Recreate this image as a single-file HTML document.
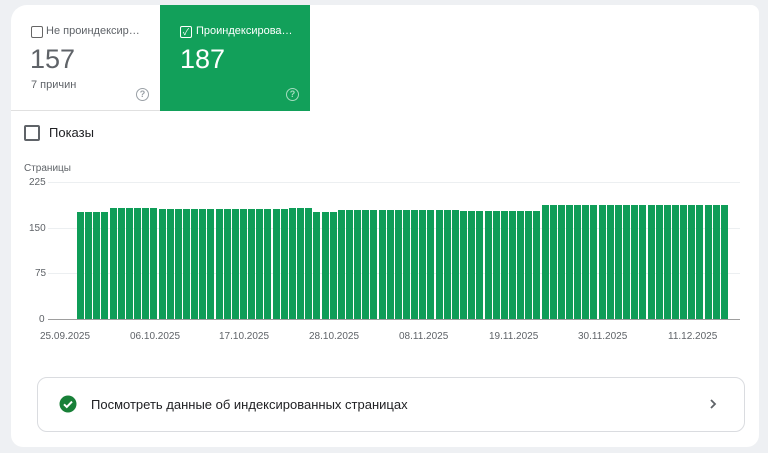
<!DOCTYPE html>
<html><head><meta charset="utf-8"><style>
body{margin:0;width:768px;height:453px;background:#eef0f3;font-family:"Liberation Sans",Roboto,"Noto Sans CJK SC",sans-serif;overflow:hidden;position:relative}
.card{position:absolute;left:11px;top:5px;width:748px;height:442px;background:#fff;border-radius:16px 8px 12px 12px}
.t1{position:absolute;left:11px;top:5px;width:149px;height:105px;border-bottom:1px solid #e0e0e0;border-top-left-radius:16px}
.t2{position:absolute;left:160px;top:5px;width:150px;height:106px;background:#12a05a}
.cb{position:absolute;width:10px;height:10px;border:1px solid #666;border-radius:2px}
.lbl{position:absolute;font-size:11px;color:#5f6368}
.num{position:absolute;font-size:27px;color:#5f6368}
.q{position:absolute;width:11px;height:11px;border:1.3px solid #9aa0a6;border-radius:50%;font-size:9px;line-height:11px;text-align:center;color:#9aa0a6;font-weight:bold}
.ax{position:absolute;font-size:10px;color:#5f6368}
.grid{position:absolute;left:48px;width:692px;height:1px;background:#eceff1}
.bar{position:absolute;width:7px;background:#0f9d58}
.btn{position:absolute;left:37px;top:377px;width:706px;height:53px;border:1px solid #dadce0;border-radius:10px;background:#fff}
</style></head><body>
<div class="card"></div>
<div class="t1"></div>
<div class="cb" style="left:31px;top:26px"></div>
<div class="lbl" style="left:46px;top:25px">Не проиндексир…</div>
<div class="num" style="left:30px;top:44px">157</div>
<div class="lbl" style="left:31px;top:79px">7 причин</div>
<div class="q" style="left:136px;top:88px">?</div>
<div class="t2"></div>
<div class="cb" style="left:180px;top:26px;border-color:#fff;color:#fff;font-size:9px;line-height:10px;text-align:center">✓</div>
<div class="lbl" style="left:196px;top:25px;color:#fff">Проиндексирова…</div>
<div class="num" style="left:180px;top:44px;color:#fff">187</div>
<div class="q" style="left:286px;top:88px;border-color:#a5dcbf;color:#a5dcbf">?</div>
<div style="position:absolute;left:24px;top:125px;width:12px;height:12px;border:2px solid #5f6368;border-radius:2px"></div>
<div style="position:absolute;left:49px;top:125px;font-size:13px;color:#202124">Показы</div>
<div class="ax" style="left:24px;top:163px">Страницы</div>
<div class="ax" style="left:29px;top:177px">225</div><div class="grid" style="top:182px"></div>
<div class="ax" style="left:29px;top:223px">150</div><div class="grid" style="top:228px"></div>
<div class="ax" style="left:35px;top:268px">75</div><div class="grid" style="top:273px"></div>
<div class="ax" style="left:39px;top:314px">0</div><div class="grid" style="top:319px;background:#9e9e9e"></div>
<div id="bars"></div>
<div class="ax" style="left:40px;top:331px">25.09.2025</div>
<div class="ax" style="left:130px;top:331px">06.10.2025</div>
<div class="ax" style="left:219px;top:331px">17.10.2025</div>
<div class="ax" style="left:309px;top:331px">28.10.2025</div>
<div class="ax" style="left:399px;top:331px">08.11.2025</div>
<div class="ax" style="left:489px;top:331px">19.11.2025</div>
<div class="ax" style="left:578px;top:331px">30.11.2025</div>
<div class="ax" style="left:668px;top:331px">11.12.2025</div>
<div class="btn"></div>
<svg style="position:absolute;left:59px;top:395px" width="18" height="18" viewBox="0 0 18 18"><circle cx="9" cy="9" r="8.5" fill="#188038"/><path d="M5 9.3l2.8 2.7L13 6.6" stroke="#fff" stroke-width="2" fill="none"/></svg>
<div style="position:absolute;left:91px;top:397px;font-size:13px;color:#202124">Посмотреть данные об индексированных страницах</div>
<svg style="position:absolute;left:708px;top:398px" width="10" height="12" viewBox="0 0 10 12"><path d="M3 2l4 4-4 4" stroke="#5f6368" stroke-width="1.8" fill="none"/></svg>
<script>
var h='';for(var i=0;i<80;i++){var t;if(i<4)t=211.5;else if(i<10)t=208.3;else if(i<18)t=209.3;else if(i<23)t=208.5;else if(i<26)t=209.3;else if(i<29)t=208.3;else if(i<32)t=212;else if(i<47)t=209.5;else if(i<57)t=210.5;else t=205;
var x=77+i*8.15;h+='<div class="bar" style="left:'+x.toFixed(2)+'px;top:'+t+'px;height:'+(319-t)+'px"></div>';}
document.getElementById('bars').innerHTML=h;
</script>
</body></html>
